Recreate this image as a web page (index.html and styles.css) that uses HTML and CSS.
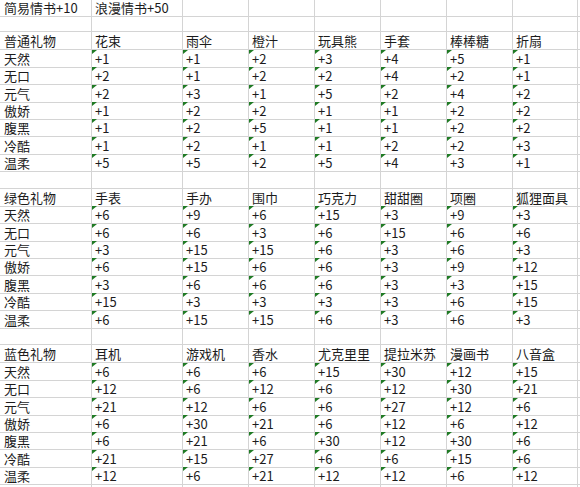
FILE: index.html
```html
<!DOCTYPE html>
<html lang="zh-CN">
<head>
<meta charset="utf-8">
<title>礼物好感度</title>
<link rel="stylesheet" href="styles.css">
</head>
<body>
<div class="sheet">
  <div class="row first"><div class="c">简易情书+10</div><div class="c">浪漫情书+50</div><div class="c"></div><div class="c"></div><div class="c"></div><div class="c"></div><div class="c"></div><div class="c"></div><div class="c"></div></div>
  <div class="row"><div class="c"></div><div class="c"></div><div class="c"></div><div class="c"></div><div class="c"></div><div class="c"></div><div class="c"></div><div class="c"></div><div class="c"></div></div>

  <div class="row"><div class="c">普通礼物</div><div class="c">花束</div><div class="c">雨伞</div><div class="c">橙汁</div><div class="c">玩具熊</div><div class="c">手套</div><div class="c">棒棒糖</div><div class="c">折扇</div><div class="c"></div></div>
  <div class="row"><div class="c">天然</div><div class="c n">+1</div><div class="c n">+1</div><div class="c n">+2</div><div class="c n">+3</div><div class="c n">+4</div><div class="c n">+5</div><div class="c n">+1</div><div class="c"></div></div>
  <div class="row"><div class="c">无口</div><div class="c n">+2</div><div class="c n">+1</div><div class="c n">+2</div><div class="c n">+2</div><div class="c n">+4</div><div class="c n">+2</div><div class="c n">+1</div><div class="c"></div></div>
  <div class="row"><div class="c">元气</div><div class="c n">+2</div><div class="c n">+3</div><div class="c n">+1</div><div class="c n">+5</div><div class="c n">+2</div><div class="c n">+4</div><div class="c n">+2</div><div class="c"></div></div>
  <div class="row"><div class="c">傲娇</div><div class="c n">+1</div><div class="c n">+2</div><div class="c n">+2</div><div class="c n">+1</div><div class="c n">+1</div><div class="c n">+2</div><div class="c n">+2</div><div class="c"></div></div>
  <div class="row"><div class="c">腹黑</div><div class="c n">+1</div><div class="c n">+2</div><div class="c n">+5</div><div class="c n">+1</div><div class="c n">+1</div><div class="c n">+2</div><div class="c n">+2</div><div class="c"></div></div>
  <div class="row"><div class="c">冷酷</div><div class="c n">+1</div><div class="c n">+2</div><div class="c n">+1</div><div class="c n">+1</div><div class="c n">+2</div><div class="c n">+2</div><div class="c n">+3</div><div class="c"></div></div>
  <div class="row"><div class="c">温柔</div><div class="c n">+5</div><div class="c n">+5</div><div class="c n">+2</div><div class="c n">+5</div><div class="c n">+4</div><div class="c n">+3</div><div class="c n">+1</div><div class="c"></div></div>
  <div class="row"><div class="c"></div><div class="c"></div><div class="c"></div><div class="c"></div><div class="c"></div><div class="c"></div><div class="c"></div><div class="c"></div><div class="c"></div></div>

  <div class="row"><div class="c">绿色礼物</div><div class="c">手表</div><div class="c">手办</div><div class="c">围巾</div><div class="c">巧克力</div><div class="c">甜甜圈</div><div class="c">项圈</div><div class="c">狐狸面具</div><div class="c"></div></div>
  <div class="row"><div class="c">天然</div><div class="c n">+6</div><div class="c n">+9</div><div class="c n">+6</div><div class="c n">+15</div><div class="c n">+3</div><div class="c n">+9</div><div class="c n">+3</div><div class="c"></div></div>
  <div class="row"><div class="c">无口</div><div class="c n">+6</div><div class="c n">+6</div><div class="c n">+3</div><div class="c n">+6</div><div class="c n">+15</div><div class="c n">+6</div><div class="c n">+6</div><div class="c"></div></div>
  <div class="row"><div class="c">元气</div><div class="c n">+3</div><div class="c n">+15</div><div class="c n">+15</div><div class="c n">+6</div><div class="c n">+3</div><div class="c n">+6</div><div class="c n">+3</div><div class="c"></div></div>
  <div class="row"><div class="c">傲娇</div><div class="c n">+6</div><div class="c n">+15</div><div class="c n">+6</div><div class="c n">+6</div><div class="c n">+3</div><div class="c n">+9</div><div class="c n">+12</div><div class="c"></div></div>
  <div class="row"><div class="c">腹黑</div><div class="c n">+3</div><div class="c n">+6</div><div class="c n">+6</div><div class="c n">+6</div><div class="c n">+3</div><div class="c n">+3</div><div class="c n">+15</div><div class="c"></div></div>
  <div class="row"><div class="c">冷酷</div><div class="c n">+15</div><div class="c n">+3</div><div class="c n">+3</div><div class="c n">+3</div><div class="c n">+3</div><div class="c n">+6</div><div class="c n">+15</div><div class="c"></div></div>
  <div class="row"><div class="c">温柔</div><div class="c n">+6</div><div class="c n">+15</div><div class="c n">+15</div><div class="c n">+6</div><div class="c n">+3</div><div class="c n">+6</div><div class="c n">+3</div><div class="c"></div></div>
  <div class="row"><div class="c"></div><div class="c"></div><div class="c"></div><div class="c"></div><div class="c"></div><div class="c"></div><div class="c"></div><div class="c"></div><div class="c"></div></div>

  <div class="row"><div class="c">蓝色礼物</div><div class="c">耳机</div><div class="c">游戏机</div><div class="c">香水</div><div class="c">尤克里里</div><div class="c">提拉米苏</div><div class="c">漫画书</div><div class="c">八音盒</div><div class="c"></div></div>
  <div class="row"><div class="c">天然</div><div class="c n">+6</div><div class="c n">+6</div><div class="c n">+6</div><div class="c n">+15</div><div class="c n">+30</div><div class="c n">+12</div><div class="c n">+15</div><div class="c"></div></div>
  <div class="row"><div class="c">无口</div><div class="c n">+12</div><div class="c n">+6</div><div class="c n">+12</div><div class="c n">+6</div><div class="c n">+12</div><div class="c n">+30</div><div class="c n">+21</div><div class="c"></div></div>
  <div class="row"><div class="c">元气</div><div class="c n">+21</div><div class="c n">+12</div><div class="c n">+6</div><div class="c n">+6</div><div class="c n">+27</div><div class="c n">+12</div><div class="c n">+6</div><div class="c"></div></div>
  <div class="row"><div class="c">傲娇</div><div class="c n">+6</div><div class="c n">+30</div><div class="c n">+21</div><div class="c n">+6</div><div class="c n">+12</div><div class="c n">+6</div><div class="c n">+12</div><div class="c"></div></div>
  <div class="row"><div class="c">腹黑</div><div class="c n">+6</div><div class="c n">+21</div><div class="c n">+6</div><div class="c n">+30</div><div class="c n">+12</div><div class="c n">+30</div><div class="c n">+6</div><div class="c"></div></div>
  <div class="row"><div class="c">冷酷</div><div class="c n">+21</div><div class="c n">+15</div><div class="c n">+27</div><div class="c n">+6</div><div class="c n">+6</div><div class="c n">+15</div><div class="c n">+6</div><div class="c"></div></div>
  <div class="row"><div class="c">温柔</div><div class="c n">+12</div><div class="c n">+6</div><div class="c n">+21</div><div class="c n">+12</div><div class="c n">+12</div><div class="c n">+6</div><div class="c n">+12</div><div class="c"></div></div>
  <div class="row"><div class="c"></div><div class="c"></div><div class="c"></div><div class="c"></div><div class="c"></div><div class="c"></div><div class="c"></div><div class="c"></div><div class="c"></div></div>
</div>
</body>
</html>
```

FILE: styles.css
```css
html, body {
  margin: 0;
  padding: 0;
  background: #ffffff;
}

body {
  width: 580px;
  height: 487px;
  overflow: hidden;
  font-family: "Noto Sans CJK SC", "Liberation Sans", sans-serif;
  font-size: 13px;
  color: #1c1c1c;
}

.row {
  display: grid;
  grid-template-columns: 92px 91px 66px 66px 66px 66px 66px 65px 20px;
  height: 17.4px;
}

.row.first {
  height: 15px;
}

.c {
  position: relative;
  box-sizing: border-box;
  border-right: 1px solid #d4d4d4;
  border-bottom: 1px solid #d4d4d4;
  padding-left: 3px;
  line-height: 17px;
  white-space: nowrap;
}

.first .c {
  line-height: 16px;
}

.row > .c:first-child {
  padding-left: 4px;
}

.n::before {
  content: "";
  position: absolute;
  left: 0;
  top: 0;
  width: 0;
  height: 0;
  border-top: 4px solid #1f7a24;
  border-right: 5px solid transparent;
}
```
